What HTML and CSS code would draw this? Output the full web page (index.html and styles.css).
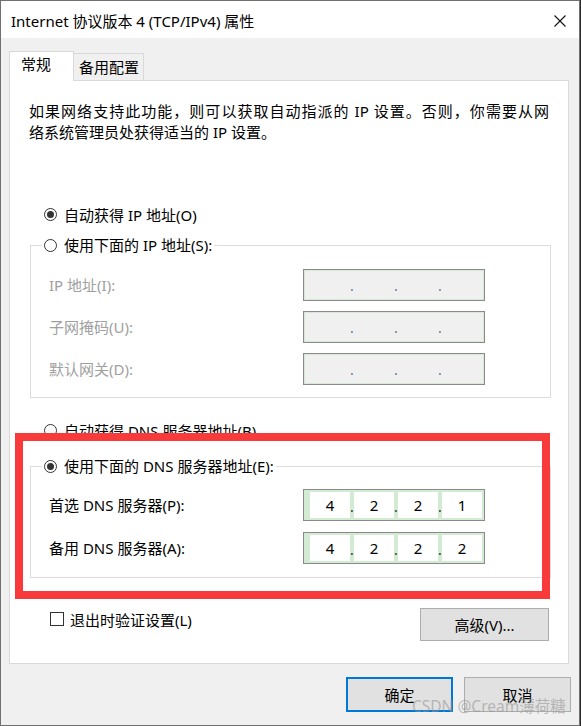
FILE: index.html
```html
<!DOCTYPE html>
<html lang="zh-CN">
<head>
    <meta charset="UTF-8">
    <title>Internet 协议版本 4 (TCP/IPv4) 属性</title>
    <link rel="stylesheet" href="styles.css">
</head>
<body>
    <div class="window">
        <!-- 标题栏 -->
        <div class="titlebar">
            <span class="title">Internet 协议版本 4 (TCP/IPv4) 属性</span>
            <svg class="close" width="12" height="12" viewBox="0 0 12 12">
                <path d="M0.5 0.5 L11.5 11.5 M11.5 0.5 L0.5 11.5" stroke="#111" stroke-width="1.1" fill="none"/>
            </svg>
        </div>

        <div class="content">
            <div class="tabs">
                <div class="tab active">常规</div>
                <div class="tab">备用配置</div>
            </div>

            <div class="panel">
                <p class="intro"><span class="intro-line">如果网络支持此功能，则可以获取自动指派的 IP 设置。否则，你需要从网</span>络系统管理员处获得适当的 IP 设置。</p>

                <div class="radio-row ip-auto"><span class="radio checked"></span>自动获得 IP 地址(O)</div>

                <fieldset class="group ip-group">
                    <legend><span class="radio"></span>使用下面的 IP 地址(S):</legend>
                    <div class="field-row disabled">
                        <span class="field-label">IP 地址(I):</span>
                        <div class="ipbox off"><span class="seg"></span><span class="dot">.</span><span class="seg"></span><span class="dot">.</span><span class="seg"></span><span class="dot">.</span><span class="seg"></span></div>
                    </div>
                    <div class="field-row disabled">
                        <span class="field-label">子网掩码(U):</span>
                        <div class="ipbox off"><span class="seg"></span><span class="dot">.</span><span class="seg"></span><span class="dot">.</span><span class="seg"></span><span class="dot">.</span><span class="seg"></span></div>
                    </div>
                    <div class="field-row disabled">
                        <span class="field-label">默认网关(D):</span>
                        <div class="ipbox off"><span class="seg"></span><span class="dot">.</span><span class="seg"></span><span class="dot">.</span><span class="seg"></span><span class="dot">.</span><span class="seg"></span></div>
                    </div>
                </fieldset>

                <div class="radio-row dns-auto"><span class="radio"></span>自动获得 DNS 服务器地址(B)</div>

                <fieldset class="group dns-group">
                    <legend><span class="radio checked"></span>使用下面的 DNS 服务器地址(E):</legend>
                    <div class="field-row">
                        <span class="field-label">首选 DNS 服务器(P):</span>
                        <div class="ipbox"><span class="seg">4</span><span class="dot">.</span><span class="seg">2</span><span class="dot">.</span><span class="seg">2</span><span class="dot">.</span><span class="seg">1</span></div>
                    </div>
                    <div class="field-row">
                        <span class="field-label">备用 DNS 服务器(A):</span>
                        <div class="ipbox"><span class="seg">4</span><span class="dot">.</span><span class="seg">2</span><span class="dot">.</span><span class="seg">2</span><span class="dot">.</span><span class="seg">2</span></div>
                    </div>
                </fieldset>

                <div class="options-row">
                    <div class="check-row"><span class="checkbox"></span>退出时验证设置(L)</div>
                    <button class="btn advanced">高级(V)...</button>
                </div>
            </div>

            <div class="footer">
                <button class="btn primary">确定</button>
                <button class="btn">取消</button>
            </div>
        </div>

        <!-- 截图上的标注框和水印 -->
        <div class="highlight"></div>
        <div class="watermark">CSDN @Cream薄荷糖</div>
    </div>
</body>
</html>
```

FILE: styles.css
```css
body {
    margin: 0;
    background: #2b2b2b;
    font-family: "Noto Sans", "Noto Sans CJK SC", sans-serif;
    font-size: 15px;
    color: #000;
}
.window {
    position: relative;
    width: 580px;
    height: 726px;
    box-sizing: border-box;
    border: 1px solid #707070;
    background: #f0f0f0;
    overflow: hidden;
}
.titlebar {
    height: 37px;
    background: #fff;
    display: flex;
    align-items: center;
    justify-content: space-between;
    padding: 2px 13px 0 10px;
    box-sizing: border-box;
}
.title {
    line-height: 20px;
    white-space: nowrap;
}
.close {
    display: block;
}

/* 选项卡 */
.tabs {
    display: flex;
    align-items: flex-end;
    height: 30px;
    margin: 13px 0 0 8px;
}
.tab {
    box-sizing: border-box;
    border: 1px solid #d9d9d9;
    border-bottom: none;
    line-height: 20px;
    white-space: nowrap;
}
.tab.active {
    position: relative;
    z-index: 1;
    width: 65px;
    height: 30px;
    padding: 2px 0 0 11px;
    background: #fff;
}
.tab:not(.active) {
    width: 71px;
    height: 27px;
    margin-bottom: 1px;
    margin-left: -1px;
    padding: 3px 0 0 5px;
    background: #f0f0f0;
}

.panel {
    width: 560px;
    margin: -1px 0 0 8px;
    box-sizing: border-box;
    border: 1px solid #d9d9d9;
    background: #fff;
    padding: 20px 0 22px 19px;
}
.intro {
    margin: 0;
    line-height: 21px;
}
/* 第一行两端对齐，和原对话框一样铺满 */
.intro-line {
    display: block;
    width: 520px;
    text-align: justify;
    text-align-last: justify;
}

.radio-row {
    display: flex;
    align-items: center;
    gap: 7px;
    height: 20px;
    padding-left: 15px;
}
.ip-auto {
    margin-top: 61px;
}
.dns-auto {
    margin-top: 22px;
}
.radio {
    position: relative;
    width: 13px;
    height: 13px;
    box-sizing: border-box;
    border: 1px solid #333;
    border-radius: 50%;
    background: #fff;
    flex-shrink: 0;
}
.radio.checked::after {
    content: "";
    position: absolute;
    left: 2px;
    top: 2px;
    width: 7px;
    height: 7px;
    border-radius: 50%;
    background: #333;
}

/* 分组框 */
.group {
    width: 521px;
    margin: 0 0 0 1px;
    box-sizing: border-box;
    border: 1px solid #dcdcdc;
    padding: 0;
    min-inline-size: 0;
}
.group legend {
    display: flex;
    align-items: center;
    gap: 7px;
    height: 20px;
    line-height: 20px;
    margin-left: 11px;
    padding: 0 2px;
}
.ip-group {
    margin-top: 11px;
    padding: 14px 0 12px 0;
}
.dns-group {
    margin-top: 16px;
    padding: 13px 0 13px 0;
}
.field-row {
    display: flex;
    align-items: center;
    height: 32px;
    padding-left: 18px;
}
.ip-group .field-row + .field-row {
    margin-top: 10px;
}
.dns-group .field-row + .field-row {
    margin-top: 11px;
}
.field-label {
    width: 254px;
    line-height: 20px;
}
.field-row.disabled .field-label {
    color: #a0a0a0;
}

/* IP 地址输入框 */
.ipbox {
    display: flex;
    width: 182px;
    height: 32px;
    box-sizing: border-box;
    border: 1px solid #8a8a8a;
    background: #d3ebd3;
    padding: 2px 2px 2px 6px;
}
.ipbox .seg {
    width: 40px;
    background: #fff;
    text-align: center;
    line-height: 27px;
}
.ipbox .dot {
    width: 4px;
    text-align: center;
    line-height: 29px;
    font-size: 14px;
    color: #333;
    overflow: visible;
}
.ipbox.off {
    background: #f0f0f0;
    box-shadow: inset 0 0 0 1px #d6e8d6;
}
.ipbox.off .seg {
    background: transparent;
}
.ipbox.off .dot {
    color: #6d7a8a;
    line-height: 27px;
}

.options-row {
    display: flex;
    justify-content: space-between;
    align-items: flex-start;
    width: 521px;
    margin-top: 30px;
}
.check-row {
    display: flex;
    align-items: center;
    gap: 6px;
    height: 20px;
    margin: 1px 0 0 21px;
}
.checkbox {
    width: 14px;
    height: 14px;
    box-sizing: border-box;
    border: 1px solid #333;
    background: #fff;
}

.btn {
    font-family: inherit;
    font-size: 15px;
    color: #000;
    background: #e1e1e1;
    border: 1px solid #adadad;
    padding: 0;
    box-sizing: border-box;
}
.advanced {
    width: 129px;
    height: 33px;
    margin-right: 1px;
}
.footer {
    display: flex;
    justify-content: flex-end;
    gap: 11px;
    margin-top: 13px;
    padding-right: 8px;
}
.footer .btn {
    width: 107px;
    height: 35px;
}
.btn.primary {
    border: 2px solid #0078d7;
}

.highlight {
    position: absolute;
    left: 14px;
    top: 432px;
    width: 535px;
    height: 166px;
    box-sizing: border-box;
    border: 8px solid #f93a3a;
}
.watermark {
    position: absolute;
    left: 411px;
    top: 695px;
    font-size: 15.5px;
    line-height: 20px;
    color: rgba(150, 150, 150, 0.6);
    white-space: nowrap;
}
```
